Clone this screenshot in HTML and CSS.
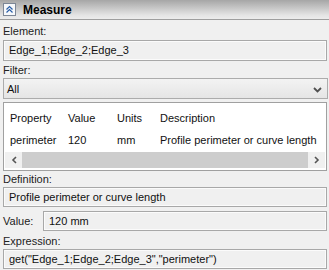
FILE: index.html
```html
<!DOCTYPE html>
<html lang="en">
<head>
  <meta charset="UTF-8">
  <title>Measure</title>
  <link rel="stylesheet" href="styles.css">
</head>
<body>
  <div class="panel">
    <div class="header">
      <span class="collapse">
        <svg width="9" height="9" viewBox="0 0 9 9">
          <path d="M1.5 4.5 L4.5 1.5 L7.5 4.5 M1.5 7.5 L4.5 4.5 L7.5 7.5" fill="none" stroke="#2a5fa8" stroke-width="1.2"/>
        </svg>
      </span>
      <span class="title">Measure</span>
    </div>

    <div class="body">
      <div class="label first">Element:</div>
      <div class="field tall">Edge_1;Edge_2;Edge_3</div>

      <div class="label">Filter:</div>
      <div class="select">
        <span>All</span>
        <svg width="9" height="6" viewBox="0 0 9 6">
          <path d="M1 1 L4.5 4.5 L8 1" fill="none" stroke="#505050" stroke-width="1.8"/>
        </svg>
      </div>

      <div class="table">
        <div class="row head">
          <span class="c1">Property</span>
          <span class="c2">Value</span>
          <span class="c3">Units</span>
          <span class="c4">Description</span>
        </div>
        <div class="row">
          <span class="c1">perimeter</span>
          <span class="c2">120</span>
          <span class="c3">mm</span>
          <span class="c4">Profile perimeter or curve length</span>
        </div>
        <div class="scrollbar">
          <span class="arrow">
            <svg width="6" height="8" viewBox="0 0 6 8"><path d="M5 1 L2 4 L5 7" fill="none" stroke="#555" stroke-width="1.6"/></svg>
          </span>
          <span class="track"></span>
          <span class="arrow">
            <svg width="6" height="8" viewBox="0 0 6 8"><path d="M1 1 L4 4 L1 7" fill="none" stroke="#555" stroke-width="1.6"/></svg>
          </span>
        </div>
      </div>

      <div class="label">Definition:</div>
      <div class="field">Profile perimeter or curve length</div>

      <div class="value-row">
        <span class="label">Value:</span>
        <div class="field grow">120 mm</div>
      </div>

      <div class="label last">Expression:</div>
      <div class="field">get("Edge_1;Edge_2;Edge_3","perimeter")</div>
    </div>
  </div>
</body>
</html>
```

FILE: styles.css
```css
* {
  margin: 0;
  padding: 0;
  box-sizing: border-box;
}

body {
  background: #f0f0f0;
  font-family: "Liberation Sans", Arial, sans-serif;
  font-size: 11px;
  color: #111;
  width: 329px;
  height: 270px;
  overflow: hidden;
}

.header {
  height: 20px;
  display: flex;
  align-items: center;
  gap: 7px;
  padding-left: 3px;
  background: linear-gradient(#a6a6a6, #e4e4e4 80%, #ececec);
  border-bottom: 1px solid #9e9e9e;
}

.collapse {
  width: 13px;
  height: 13px;
  display: flex;
  align-items: center;
  justify-content: center;
  background: #f6f8fb;
  border: 1px solid #7d8796;
}

.title {
  font-weight: bold;
  font-size: 12px;
  color: #000;
}

.body {
  padding: 0 2px 0 3px;
}

.label {
  height: 16px;
  line-height: 16px;
  color: #222;
}

.label.first {
  height: 20px;
  line-height: 22px;
}

.label.last {
  height: 18px;
  line-height: 21px;
}

.field {
  height: 20px;
  line-height: 18px;
  padding-left: 5px;
  border: 1px solid #a8a8a8;
  box-shadow: inset 0 0 0 1px #fbfbfb;
  white-space: nowrap;
  overflow: hidden;
}

.field.tall {
  height: 21px;
  line-height: 19px;
  margin-bottom: 1px;
}

.select {
  height: 21px;
  display: flex;
  align-items: center;
  justify-content: space-between;
  padding: 0 5px 0 3px;
  margin-right: -1px;
  border: 1px solid #acacac;
  background: linear-gradient(#f3f3f3, #e5e5e5);
}

.select svg {
  margin-top: 3px;
}

.table {
  margin-top: 3px;
  height: 69px;
  background: #fff;
  border: 1px solid #a0a0a0;
  padding: 4px 1px 0 1px;
}

.row {
  display: flex;
  height: 22px;
  line-height: 22px;
  white-space: nowrap;
}

.c1 { flex: none; width: 58px; padding-left: 5px; }
.c2 { flex: none; width: 49px; padding-left: 5px; }
.c3 { flex: none; width: 43px; padding-left: 5px; }
.c4 { flex: none; padding-left: 5px; }

.scrollbar {
  display: flex;
  height: 16px;
  margin-top: 1px;
  background: #f0f0f0;
}

.scrollbar .arrow {
  width: 17px;
  display: flex;
  align-items: center;
  justify-content: center;
}

.scrollbar .track {
  flex: 1;
  background: #cdcdcd;
}

.value-row {
  display: flex;
  align-items: center;
  margin-top: 4px;
}

.value-row .label {
  width: 40px;
}

.grow {
  flex: 1;
}
```
